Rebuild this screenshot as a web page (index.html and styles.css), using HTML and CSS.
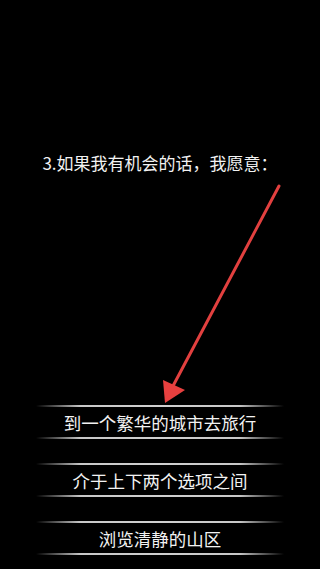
FILE: index.html
```html
<!DOCTYPE html>
<html>
<head>
<meta charset="utf-8">
<link rel="stylesheet" href="styles.css">
</head>
<body>
<div class="page">
  <div class="title">3.如果我有机会的话，我愿意：</div>
  <div class="options">
    <div class="option">到一个繁华的城市去旅行</div>
    <div class="option">介于上下两个选项之间</div>
    <div class="option">浏览清静的山区</div>
  </div>
  <svg class="arrow" width="320" height="569" viewBox="0 0 320 569">
    <line x1="279" y1="186" x2="173" y2="386" stroke="#e2403f" stroke-width="3" stroke-linecap="round"/>
    <polygon points="163,380 185,390 165,403" fill="#e8403f"/>
  </svg>
</div>
</body>
</html>
```
FILE: styles.css
```css
html, body {
  margin: 0;
  padding: 0;
  background: #000;
}
.page {
  position: relative;
  width: 320px;
  height: 569px;
  overflow: hidden;
  background: #000;
  font-family: "Noto Sans CJK SC", "Noto Sans", sans-serif;
  color: #f2f2f2;
}
.title {
  padding-top: 152px;
  font-size: 17px;
  line-height: 22px;
  text-align: center;
}
.options {
  margin-top: 231px;
  display: flex;
  flex-direction: column;
  gap: 24px;
}
.option {
  margin: 0 36px;
  height: 34px;
  display: flex;
  align-items: center;
  justify-content: center;
  font-size: 17.5px;
  background:
    linear-gradient(to right, rgba(200,200,200,0), #c8c8c8 18%, #d0d0d0 50%, #c8c8c8 82%, rgba(200,200,200,0)) top / 100% 2px no-repeat,
    linear-gradient(to right, rgba(200,200,200,0), #c8c8c8 18%, #d0d0d0 50%, #c8c8c8 82%, rgba(200,200,200,0)) bottom / 100% 2px no-repeat;
}
.arrow {
  position: absolute;
  top: 0;
  left: 0;
}
```
